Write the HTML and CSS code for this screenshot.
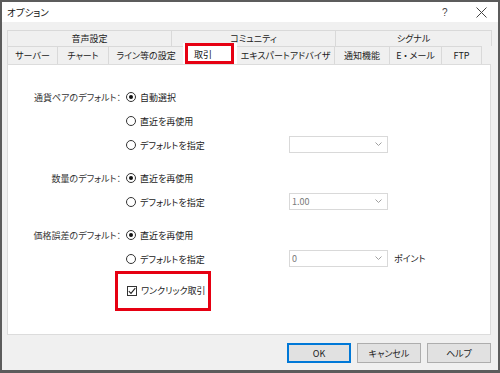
FILE: index.html
```html
<!DOCTYPE html>
<html lang="ja">
<head>
<meta charset="utf-8">
<link rel="stylesheet" href="styles.css">
</head>
<body>
<div class="win">
  <div class="titlebar">
    <span class="title">オプション</span>
    <span class="qmark">?</span>
    <span class="close"><svg width="11" height="11" viewBox="0 0 11 11"><path d="M0.5 0.5L10.5 10.5M10.5 0.5L0.5 10.5" stroke="#444" stroke-width="1" fill="none"/></svg></span>
  </div>
  <div class="body">
    <div class="tabs">
      <div class="tabrow top">
        <div class="tab w164">音声設定</div>
        <div class="tab w164">コミュニティ</div>
        <div class="tab w156">シグナル</div>
      </div>
      <div class="tabrow bottom">
        <div class="tab w50">サーバー</div>
        <div class="tab w51">チャート</div>
        <div class="tab w75">ライン等の設定</div>
        <div class="tab-sel"><span class="hl">取引</span></div>
        <div class="tab w98">エキスパートアドバイザ</div>
        <div class="tab w55">通知機能</div>
        <div class="tab w52">E&#8201;・&#8201;メール</div>
        <div class="tab w40">FTP</div>
      </div>
    </div>
    <div class="panel">
      <div class="section">
        <div class="row">
          <span class="label">通貨ペアのデフォルト：</span>
          <span class="opt"><i class="radio on"></i>自動選択</span>
        </div>
        <div class="row">
          <span class="label"></span>
          <span class="opt"><i class="radio"></i>直近を再使用</span>
        </div>
        <div class="row">
          <span class="label"></span>
          <span class="opt"><i class="radio"></i>デフォルトを指定</span>
          <span class="select"><span class="val"></span><svg width="7" height="4" viewBox="0 0 7 4"><path d="M0.5 0.5L3.5 3.5L6.5 0.5" stroke="#a0a0a0" fill="none"/></svg></span>
        </div>
      </div>
      <div class="section">
        <div class="row">
          <span class="label">数量のデフォルト：</span>
          <span class="opt"><i class="radio on"></i>直近を再使用</span>
        </div>
        <div class="row">
          <span class="label"></span>
          <span class="opt"><i class="radio"></i>デフォルトを指定</span>
          <span class="select"><span class="val">1.00</span><svg width="7" height="4" viewBox="0 0 7 4"><path d="M0.5 0.5L3.5 3.5L6.5 0.5" stroke="#a0a0a0" fill="none"/></svg></span>
        </div>
      </div>
      <div class="section">
        <div class="row">
          <span class="label">価格誤差のデフォルト：</span>
          <span class="opt"><i class="radio on"></i>直近を再使用</span>
        </div>
        <div class="row">
          <span class="label"></span>
          <span class="opt"><i class="radio"></i>デフォルトを指定</span>
          <span class="select"><span class="val">0</span><svg width="7" height="4" viewBox="0 0 7 4"><path d="M0.5 0.5L3.5 3.5L6.5 0.5" stroke="#a0a0a0" fill="none"/></svg></span>
          <span class="unit">ポイント</span>
        </div>
      </div>
      <div class="cbbox">
        <span class="check"><svg width="8" height="8" viewBox="0 0 8 8"><path d="M0.8 4.2L3 6.4L7.3 1.2" stroke="#222" stroke-width="1.1" fill="none"/></svg></span>ワンクリック取引
      </div>
    </div>
    <div class="footer">
      <div class="btn default">OK</div>
      <div class="btn">キャンセル</div>
      <div class="btn">ヘルプ</div>
    </div>
  </div>
</div>
</body>
</html>
```
FILE: styles.css
```css
* { box-sizing: border-box; }
html, body { margin: 0; padding: 0; }
body {
  width: 500px;
  height: 373px;
  overflow: hidden;
  font-family: "Noto Sans CJK JP", "Noto Sans", sans-serif;
  font-feature-settings: "palt";
  font-size: 9px;
  color: #1e1e1e;
  background: #fff;
}
.win {
  width: 500px;
  height: 373px;
  border: 2px solid #5c5c5c;
  border-bottom-width: 3px;
  display: flex;
  flex-direction: column;
  background: #f0f0f0;
}
.titlebar {
  height: 20px;
  background: #fff;
  display: flex;
  align-items: center;
  padding-left: 5px;
  flex: none;
}
.title { flex: 1; font-size: 9.5px; color: #111; }
.qmark { width: 10px; margin-right: 24px; color: #444; font-size: 10px; font-family: "Liberation Sans", sans-serif; }
.close { width: 11px; height: 11px; margin-right: 11px; display: flex; }
.body {
  flex: 1;
  display: flex;
  flex-direction: column;
  padding: 8px 7px 0 5px;
}
.tabs { display: flex; flex-direction: column; flex: none; }
.tabrow { display: flex; }
.tabrow.top { height: 16px; }
.tabrow.bottom { height: 18px; align-items: flex-end; }
.tab {
  height: 100%;
  display: flex;
  align-items: center;
  justify-content: center;
  border: 1px solid #d9d9d9;
  border-bottom: none;
  margin-right: -1px;
  background: #f0f0f0;
  white-space: nowrap;
  color: #222;
}
.w164 { width: 165px; }
.w156 { width: 157px; }
.w50 { width: 51px; }
.w51 { width: 52px; }
.w75 { width: 76px; }
.w98 { width: 99px; }
.w55 { width: 56px; }
.w52 { width: 53px; }
.w40 { width: 41px; }
.tab-sel {
  width: 54px;
  height: 21px;
  margin-right: -1px;
  padding: 0 3px 0 2px;
  background: #fff;
  position: relative;
  z-index: 1;
  display: flex;
}
.hl {
  flex: 1;
  border: 3px solid #e60012;
  display: flex;
  align-items: center;
  padding-left: 6px;
  padding-top: 1px;
  background: #fff;
  color: #111;
}
.panel {
  height: 271px;
  flex: none;
  background: #fff;
  border: 1px solid #dcdcdc;
  padding-top: 20px;
}
.section { margin-bottom: 9px; }
.row {
  height: 24px;
  display: flex;
  align-items: center;
}
.label {
  width: 113px;
  text-align: right;
  white-space: nowrap;
  color: #333;
}
.opt {
  width: 168px;
  padding-left: 5px;
  display: flex;
  align-items: center;
  white-space: nowrap;
  color: #222;
}
.radio {
  width: 10px;
  height: 10px;
  border: 1px solid #333;
  border-radius: 50%;
  margin-right: 4px;
  display: flex;
  align-items: center;
  justify-content: center;
  flex: none;
}
.radio.on::after {
  content: "";
  width: 4px;
  height: 4px;
  border-radius: 50%;
  background: #111;
}
.select {
  width: 99px;
  height: 17px;
  border: 1px solid #d9d9d9;
  display: flex;
  align-items: center;
  justify-content: space-between;
  padding: 0 5px 0 2px;
  color: #7a7a7a;
  margin-top: -2px;
}
.unit { margin-left: 6px; color: #222; margin-top: -2px; }
.cbbox {
  margin-top: -9px;
  margin-left: 107px;
  width: 96px;
  height: 40px;
  border: 3px solid #e60012;
  display: flex;
  align-items: center;
  padding-left: 9px;
  padding-bottom: 1px;
  color: #222;
}
.check {
  width: 10px;
  height: 10px;
  border: 1px solid #333;
  margin-right: 4px;
  display: flex;
  align-items: center;
  justify-content: center;
}
.footer {
  flex: 1;
  display: flex;
  justify-content: flex-end;
  align-items: flex-start;
  gap: 6px;
  padding-top: 8px;
}
.btn {
  width: 64px;
  height: 20px;
  background: #e1e1e1;
  border: 1px solid #adadad;
  display: flex;
  align-items: center;
  justify-content: center;
  color: #222;
}
.btn.default {
  border: 2px solid #0078d7;
}
```
